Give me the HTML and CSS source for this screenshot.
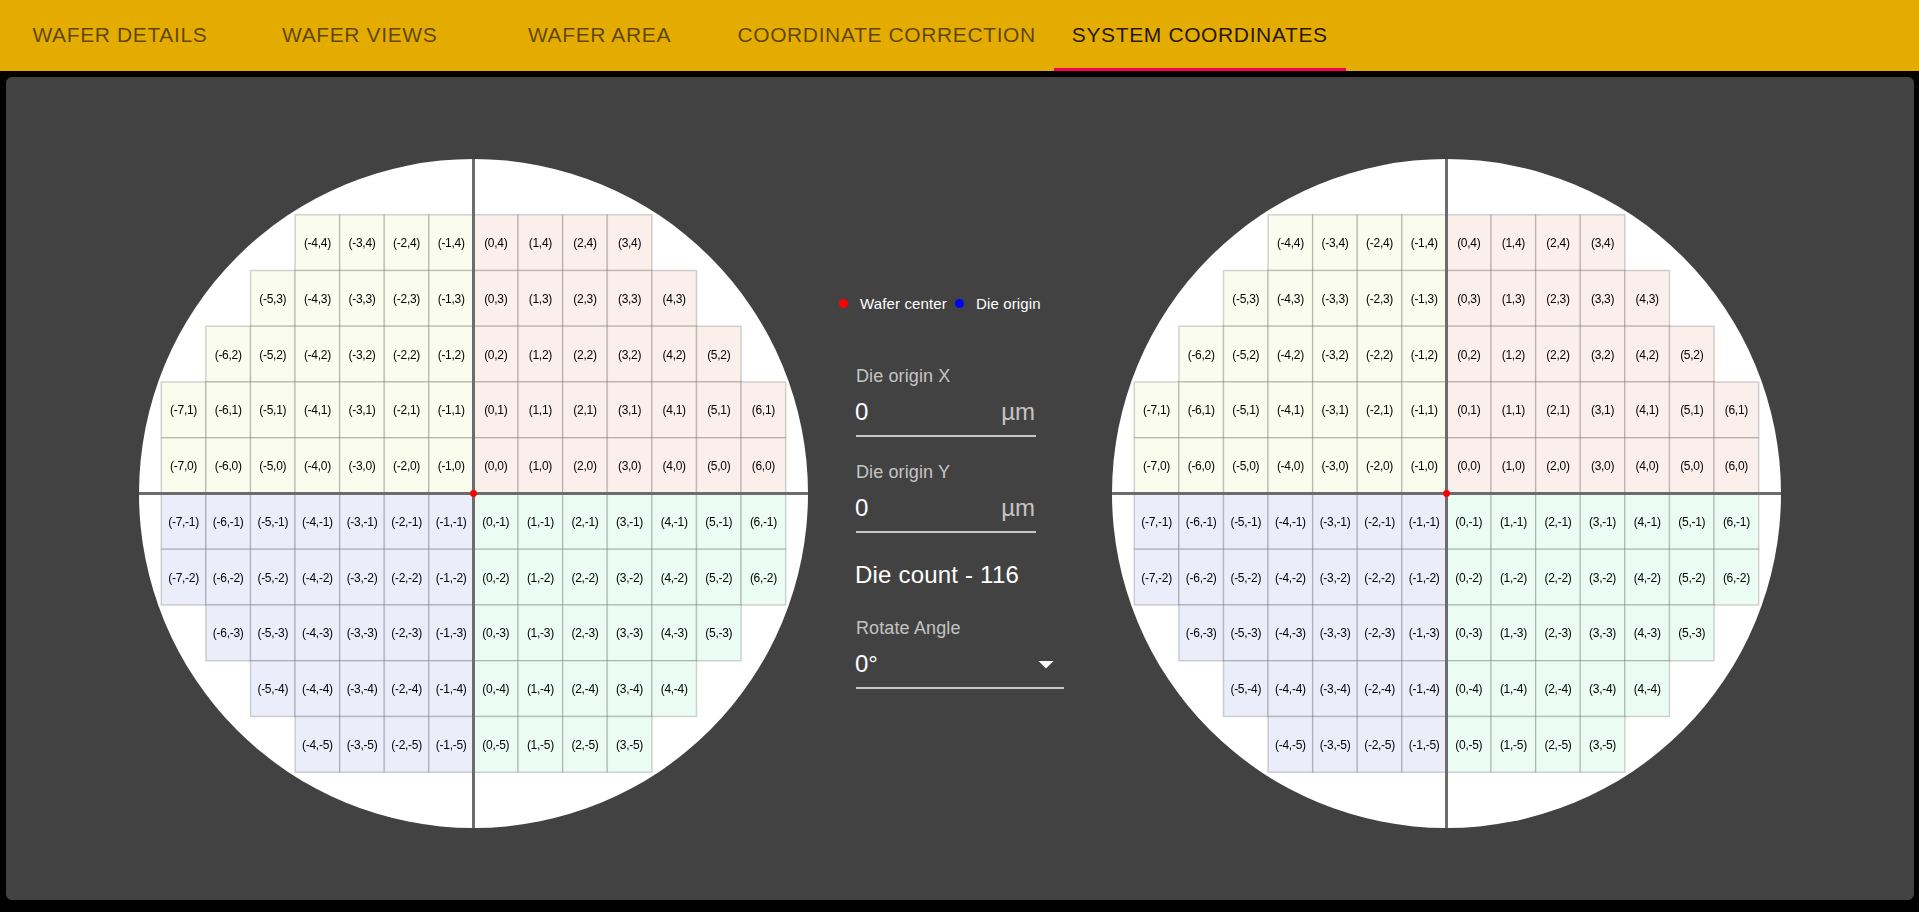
FILE: index.html
```html
<!DOCTYPE html>
<html lang="en">
<head>
<meta charset="utf-8">
<title>System Coordinates</title>
<link rel="stylesheet" href="styles.css">
</head>
<body>
<nav class="tabs">
  <a class="tab">Wafer Details</a>
  <a class="tab">Wafer Views</a>
  <a class="tab">Wafer Area</a>
  <a class="tab">Coordinate Correction</a>
  <a class="tab tab-active">System Coordinates</a>
</nav>
<main class="panel">
  <svg class="wafer" viewBox="0 0 669 669"></svg>
  <section class="controls">
    <div class="legend">
      <span class="dot dot-center"></span><span class="legend-text">Wafer center</span>
      <span class="dot dot-origin"></span><span class="legend-text">Die origin</span>
    </div>
    <div class="form">
      <div class="field">
        <label class="label">Die origin X</label>
        <div class="input"><span class="value">0</span><span class="unit">µm</span></div>
      </div>
      <div class="field">
        <label class="label">Die origin Y</label>
        <div class="input"><span class="value">0</span><span class="unit">µm</span></div>
      </div>
      <div class="count">Die count - 116</div>
      <div class="field field-select">
        <label class="label">Rotate Angle</label>
        <div class="input"><span class="value">0°</span><svg class="arrow" viewBox="0 0 24 24"><path d="M7 10l5 5 5-5z"/></svg></div>
      </div>
    </div>
  </section>
  <svg class="wafer" viewBox="0 0 669 669"></svg>
</main>
<script src="wafer.js"></script>
</body>
</html>
```
FILE: styles.css
```css
* { box-sizing: border-box; }
body {
  margin: 0;
  height: 912px;
  overflow: hidden;
  background: #000;
  color: #fff;
  font-family: "Liberation Sans", Arial, sans-serif;
}
.tabs {
  display: flex;
  height: 71px;
  background: #e4ac00;
}
.tab {
  min-width: 239.8px;
  height: 71px;
  padding: 0 18px;
  line-height: 69px;
  font-size: 21px;
  letter-spacing: 0.62px;
  text-align: center;
  text-transform: uppercase;
  white-space: nowrap;
  color: rgba(0, 0, 0, 0.6);
}
.tab-active {
  color: rgba(0, 0, 0, 0.87);
  border-bottom: 3px solid #f50057;
}
.panel {
  display: flex;
  height: 823px;
  margin: 6px 5px 0 6px;
  padding: 82px 0 0 133px;
  border-radius: 6px;
  background: #424242;
}
.wafer {
  flex: none;
  width: 669px;
  height: 669px;
}
.wafer-disc { fill: #fff; }
.die { stroke: rgba(0, 0, 0, 0.17); stroke-width: 1.5px; }
.die-nw { fill: #fafcee; }
.die-ne { fill: #fbefec; }
.die-sw { fill: #ebedfb; }
.die-se { fill: #ebfcf5; }
.axis { stroke: #6c6c6c; stroke-width: 3px; }
.center { fill: #f00; }
.die-labels {
  font-size: 12px;
  letter-spacing: -0.28px;
  text-anchor: middle;
  fill: #000;
  filter: blur(0.45px);
}
.controls {
  flex: none;
  width: 304px;
  padding: 134px 0 0 31px;
}
.legend {
  display: flex;
  align-items: center;
  height: 21px;
  font-size: 15px;
  letter-spacing: 0.14px;
}
.dot {
  width: 9px;
  height: 9px;
  border-radius: 50%;
}
.dot-center { background: #f00; }
.dot-origin { background: #00f; margin-left: 8px; }
.legend-text { margin-left: 12px; white-space: nowrap; }
.form {
  display: flex;
  flex-direction: column;
  gap: 24px;
  margin: 51px 0 0 17px;
}
.field {
  width: 180px;
  height: 72px;
}
.field-select { width: 208px; margin-top: -2px; }
.label {
  display: block;
  height: 24px;
  line-height: 23px;
  font-size: 18px;
  letter-spacing: 0.12px;
  color: rgba(255, 255, 255, 0.7);
}
.input {
  display: flex;
  justify-content: space-between;
  align-items: center;
  height: 48px;
  border-bottom: 2px solid rgba(255, 255, 255, 0.7);
  font-size: 24px;
}
.value { margin-left: -1px; }
.unit { margin-right: 1px; color: rgba(255, 255, 255, 0.7); }
.arrow { width: 36px; height: 36px; fill: #fff; }
.count {
  height: 38px;
  line-height: 36px;
  margin-left: -1px;
  font-size: 24px;
  letter-spacing: 0.2px;
}
```
FILE: wafer.js
```js
// Rows run from the top of the wafer down; each spans columns -left .. right.
const rows = [
  { y: 4, left: 4, right: 3 },
  { y: 3, left: 5, right: 4 },
  { y: 2, left: 6, right: 5 },
  { y: 1, left: 7, right: 6 },
  { y: 0, left: 7, right: 6 },
  { y: -1, left: 7, right: 6 },
  { y: -2, left: 7, right: 6 },
  { y: -3, left: 6, right: 5 },
  { y: -4, left: 5, right: 4 },
  { y: -5, left: 4, right: 3 }
];
const SIZE = 669, C = SIZE / 2, W = SIZE / 15, H = SIZE / 12;

function drawWafer(svg) {
  let dies = '', labels = '';
  for (const row of rows) {
    for (let x = -row.left; x <= row.right; x++) {
      const px = C + x * W, py = C - (row.y + 1) * H;
      const quadrant = (row.y >= 0 ? 'n' : 's') + (x < 0 ? 'w' : 'e');
      dies += `<rect class="die die-${quadrant}" x="${px}" y="${py}" width="${W}" height="${H}"/>`;
      labels += `<text x="${px + W / 2}" y="${py + H / 2 + 4.4}">(${x},${row.y})</text>`;
    }
  }
  svg.innerHTML =
    `<circle class="wafer-disc" cx="${C}" cy="${C}" r="${C}"/>${dies}` +
    `<g class="die-labels">${labels}</g>` +
    `<path class="axis" d="M${C} 0V${SIZE}M0 ${C}H${SIZE}"/>` +
    `<circle class="center" cx="${C}" cy="${C}" r="3.4"/>`;
}

document.querySelectorAll('.wafer').forEach(drawWafer);
```
